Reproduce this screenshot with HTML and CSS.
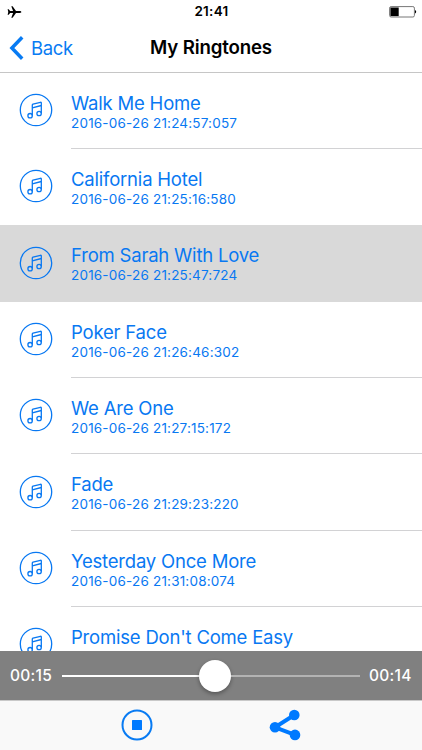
FILE: index.html
```
<!DOCTYPE html>
<html lang="en">
<head>
<meta charset="utf-8">
<title>My Ringtones</title>
<link rel="stylesheet" href="styles.css">
</head>
<body>
<svg width="0" height="0" class="defs">
  <symbol id="note" viewBox="0 0 34 34">
    <circle cx="17" cy="17" r="15.700" stroke-width="1.300"/>
    <g stroke-width="1.300" stroke-linejoin="round">
      <path d="M13.300 22.500V12.100Q13.300 11.400 14 11.200L21.400 9.300Q22.300 9.100 22.300 9.900V20.300M13.300 14.900L22.300 12.500"/>
      <ellipse cx="11.100" cy="22.700" rx="2.200" ry="2.200"/>
      <ellipse cx="20.100" cy="20.500" rx="2.200" ry="2.200"/>
    </g>
  </symbol>
</svg>
<div class="screen">
  <header class="header">
    <div class="status">
      <svg class="plane" width="15" height="12" viewBox="0 0 15 12"><path d="M14.300 6c0 .6-.7.9-1.600.9H9L5.600 11.700H4.300L6.100 6.900H3.100L1.700 8.700H.6L1.300 6 .6 3.300h1.100l1.400 1.800h3L4.300.3h1.300L9 5.100h3.700c.9 0 1.600.3 1.600.9z"/></svg>
      <span class="clock">21:41</span>
      <svg class="battery" width="28" height="12" viewBox="0 0 28 12"><rect x=".6" y=".6" width="24.800" height="10.400" rx="1.500" fill="#fff" stroke="#777"/><path d="M1.400 1.500h8.300v8.600H1.400z"/><path d="M26 4c1.600.6 1.600 3 0 3.600z"/></svg>
    </div>
    <nav class="nav">
      <a class="back"><svg width="15" height="24" viewBox="0 0 15 24"><path d="M13.200 1.300L2.900 12l10.300 10.700" fill="none" stroke="#087bf3" stroke-width="3.500"/></svg><span>Back</span></a>
      <h1 class="title">My Ringtones</h1>
      <span></span>
    </nav>
  </header>
  <main class="list">
    <div class="row"><svg class="icon"><use href="#note"/></svg><div class="text"><div class="name">Walk Me Home</div><div class="date">2016-06-26 21:24:57:057</div></div></div>
    <div class="row before-selected"><svg class="icon"><use href="#note"/></svg><div class="text"><div class="name">California Hotel</div><div class="date">2016-06-26 21:25:16:580</div></div></div>
    <div class="row selected"><svg class="icon"><use href="#note"/></svg><div class="text"><div class="name">From Sarah With Love</div><div class="date">2016-06-26 21:25:47:724</div></div></div>
    <div class="row"><svg class="icon"><use href="#note"/></svg><div class="text"><div class="name">Poker Face</div><div class="date">2016-06-26 21:26:46:302</div></div></div>
    <div class="row"><svg class="icon"><use href="#note"/></svg><div class="text"><div class="name">We Are One</div><div class="date">2016-06-26 21:27:15:172</div></div></div>
    <div class="row"><svg class="icon"><use href="#note"/></svg><div class="text"><div class="name">Fade</div><div class="date">2016-06-26 21:29:23:220</div></div></div>
    <div class="row"><svg class="icon"><use href="#note"/></svg><div class="text"><div class="name">Yesterday Once More</div><div class="date">2016-06-26 21:31:08:074</div></div></div>
    <div class="row"><svg class="icon"><use href="#note"/></svg><div class="text"><div class="name">Promise Don't Come Easy</div></div></div>
  </main>
  <section class="player">
    <span class="time">00:15</span>
    <div class="slider"><div class="played"></div><div class="thumb"></div><div class="remaining"></div></div>
    <span class="time">00:14</span>
  </section>
  <footer class="toolbar">
    <svg width="32" height="32" viewBox="0 0 32 32"><circle cx="16" cy="16" r="14.500" fill="none" stroke="#087bf3" stroke-width="2"/><rect x="11" y="11" width="10" height="10" rx=".5" fill="#007aff"/></svg>
    <svg width="32" height="32" viewBox="0 0 32 32"><path d="M25.300 6L6 18.300l20 7.500" fill="none" stroke="#007aff" stroke-width="4"/><g fill="#007aff"><circle cx="25.300" cy="6" r="5.300"/><circle cx="6" cy="18.300" r="5.300"/><circle cx="26" cy="25.900" r="5.300"/></g></svg>
  </footer>
</div>
</body>
</html>
```
FILE: styles.css
```
* { box-sizing: border-box; }
body { margin: 0; font-family: Inter, "Liberation Sans", sans-serif; background: #fff; }
.defs { display: block; height: 0; }
.screen { display: flex; flex-direction: column; width: 422px; height: 750px; overflow: hidden; }
.header { height: 72.5px; flex: none; border-bottom: 1px solid #c6c6c6; }
.status { display: grid; grid-template-columns: 1fr auto 1fr; align-items: center; height: 23px; padding: 0 6px 0 7px; }
.clock { font-size: 13.5px; font-weight: 600; line-height: 23px; letter-spacing: .3px; }
.battery { justify-self: end; margin-right: -1px; }
.nav { display: grid; grid-template-columns: 1fr auto 1fr; align-items: center; height: 49px; padding-left: 9px; padding-right: 9px; }
.back { display: flex; align-items: center; gap: 7px; color: #087bf3; font-size: 18.5px; letter-spacing: -.35px; }
.title { margin: 0; font-size: 18.7px; font-weight: 600; letter-spacing: -.17px; }
.list { flex: 1; min-height: 0; overflow: hidden; }
.row { display: flex; height: 76.35px; padding-left: 19px; color: #0878f2; }
.icon { flex: none; width: 34px; height: 34px; margin-top: 20.5px; fill: none; stroke: #0878f2; }
.text { flex: 1; margin-left: 18px; padding-top: 18px; border-bottom: 1px solid #d2d2d4; }
.name { font-size: 18.5px; line-height: 24px; letter-spacing: -.2px; white-space: nowrap; }
.date { font-size: 13.5px; line-height: 16px; letter-spacing: .19px; white-space: nowrap; }
.selected { background: #d9d9d9; }
.before-selected .text, .selected .text { border-color: transparent; }
.player { display: flex; align-items: center; flex: none; height: 49px; padding: 0 10px; background: #808080; color: #fff; }
.time { width: 43px; font-size: 15.5px; font-weight: 500; letter-spacing: .3px; white-space: nowrap; }
.slider { display: flex; align-items: center; flex: 1; margin: 0 9px; }
.played { flex: 137; height: 2px; background: #fff; }
.remaining { flex: 129; height: 2px; background: #b3b3b3; }
.thumb { flex: none; width: 32px; height: 32px; border-radius: 50%; background: #fff; box-shadow: 0 2px 4px #0005; }
.toolbar { display: flex; justify-content: center; align-items: center; flex: none; gap: 116px; height: 50px; padding-bottom: 2px; background: #f9f9f9; border-top: 1px solid #c9c9c9; }
```
